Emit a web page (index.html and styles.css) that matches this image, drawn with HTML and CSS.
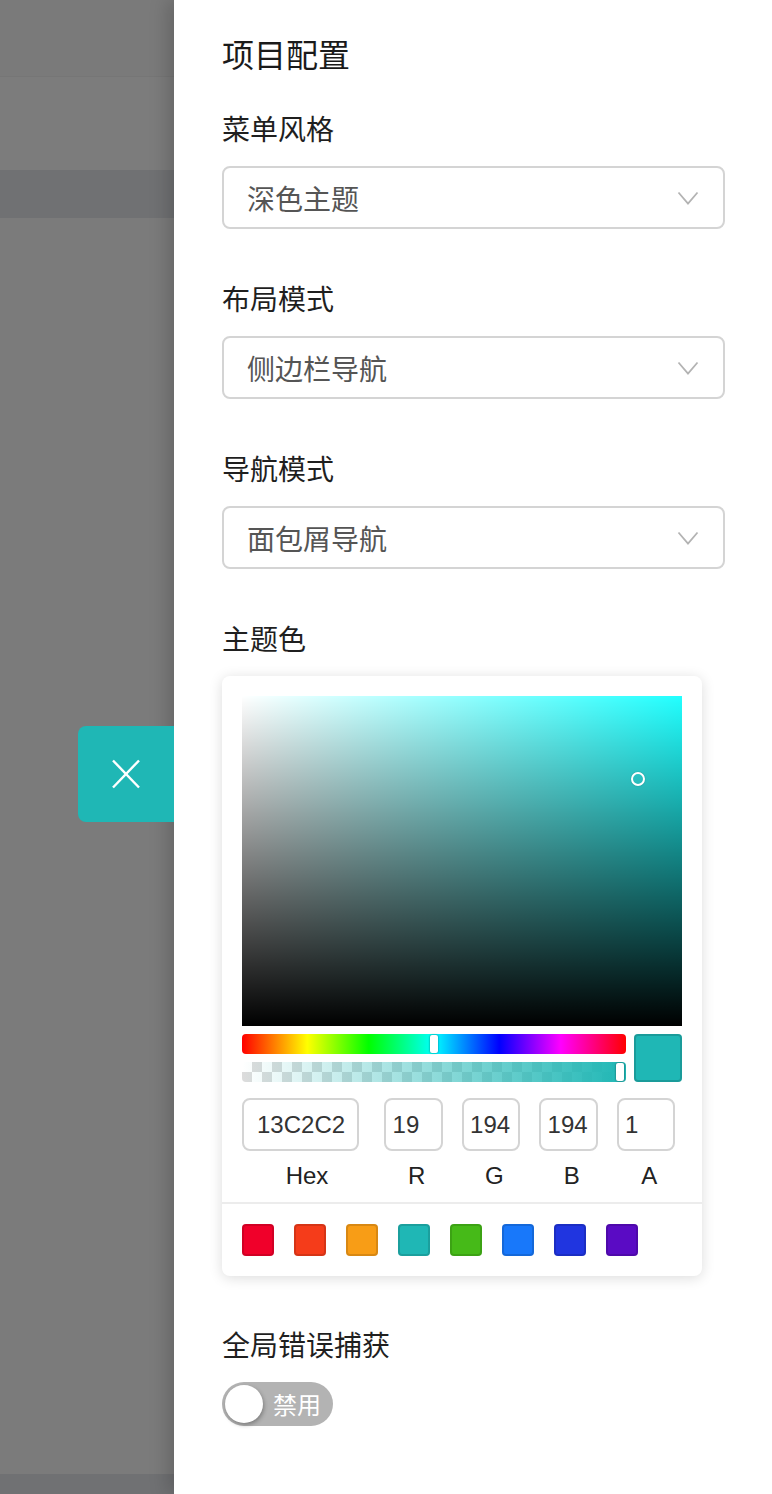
FILE: index.html
```html
<!DOCTYPE html>
<html lang="zh-CN">
<head>
<meta charset="utf-8">
<title>项目配置</title>
<link rel="stylesheet" href="styles.css">
</head>
<body>
<div class="page">
  <div class="backdrop">
    <div class="bd-header"></div>
    <div class="bd-gap"></div>
    <div class="bd-band"></div>
    <div class="bd-fill"></div>
    <div class="bd-footer"></div>
  </div>
  <aside class="drawer">
    <button class="drawer-close" type="button" aria-label="关闭">
      <svg class="close-icon" viewBox="0 0 30 30" width="30" height="30">
        <line x1="2" y1="1.5" x2="28" y2="28.5"></line>
        <line x1="28" y1="1.5" x2="2" y2="28.5"></line>
      </svg>
    </button>
    <h1 class="drawer-title">项目配置</h1>

    <div class="form-item">
      <div class="form-label">菜单风格</div>
      <div class="select">
        <span class="select-value">深色主题</span>
        <svg class="chevron" viewBox="0 0 22 14" width="22" height="14"><polyline points="1.5,1.5 11,12.5 20.5,1.5"></polyline></svg>
      </div>
    </div>

    <div class="form-item">
      <div class="form-label">布局模式</div>
      <div class="select">
        <span class="select-value">侧边栏导航</span>
        <svg class="chevron" viewBox="0 0 22 14" width="22" height="14"><polyline points="1.5,1.5 11,12.5 20.5,1.5"></polyline></svg>
      </div>
    </div>

    <div class="form-item">
      <div class="form-label">导航模式</div>
      <div class="select">
        <span class="select-value">面包屑导航</span>
        <svg class="chevron" viewBox="0 0 22 14" width="22" height="14"><polyline points="1.5,1.5 11,12.5 20.5,1.5"></polyline></svg>
      </div>
    </div>

    <div class="form-item">
      <div class="form-label">主题色</div>
      <div class="picker">
        <div class="sat">
          <div class="sat-pointer" style="left: 90%; top: 25%;"></div>
        </div>
        <div class="controls">
          <div class="sliders">
            <div class="hue"><div class="hue-pointer" style="left: 50%;"></div></div>
            <div class="alpha"><div class="alpha-grad"></div><div class="alpha-pointer"></div></div>
          </div>
          <div class="preview"></div>
        </div>
        <div class="fields">
          <div class="field"><input class="field-input" value="13C2C2"><span class="field-label">Hex</span></div>
          <div class="field field-single"><input class="field-input" value="19"><span class="field-label">R</span></div>
          <div class="field field-single"><input class="field-input" value="194"><span class="field-label">G</span></div>
          <div class="field field-single"><input class="field-input" value="194"><span class="field-label">B</span></div>
          <div class="field field-single"><input class="field-input" value="1"><span class="field-label">A</span></div>
        </div>
        <div class="presets">
          <span class="swatch sw-red"></span>
          <span class="swatch sw-volcano"></span>
          <span class="swatch sw-orange"></span>
          <span class="swatch sw-cyan"></span>
          <span class="swatch sw-green"></span>
          <span class="swatch sw-blue"></span>
          <span class="swatch sw-geek"></span>
          <span class="swatch sw-purple"></span>
        </div>
      </div>
    </div>

    <div class="form-item">
      <div class="form-label">全局错误捕获</div>
      <div class="switch">
        <span class="switch-knob"></span>
        <span class="switch-text">禁用</span>
      </div>
    </div>
  </aside>
</div>
</body>
</html>
```

FILE: styles.css
```css
html, body {
  margin: 0;
  padding: 0;
}
body {
  width: 772px;
  height: 1494px;
  overflow: hidden;
  font-family: "Noto Sans CJK SC", "Noto Sans", sans-serif;
  background: #7b7b7b;
}
.page {
  display: flex;
  width: 772px;
  height: 1494px;
}
.backdrop {
  width: 174px;
  flex: none;
  display: flex;
  flex-direction: column;
  background: #7b7b7b;
}
.bd-header {
  height: 76px;
  background: #7a7a7a;
  border-bottom: 1px solid #767676;
}
.bd-gap {
  height: 93px;
  background: #7c7c7c;
}
.bd-band {
  height: 48px;
  background: #707173;
}
.bd-fill {
  flex: 1;
  background: #7b7b7b;
}
.bd-footer {
  height: 20px;
  background: #707173;
}

.drawer {
  position: relative;
  flex: 1;
  background: #fff;
  padding: 31px 47px 0 48px;
  box-shadow: -6px 0 18px rgba(0, 0, 0, 0.18);
}
.drawer-close {
  position: absolute;
  left: -96px;
  top: 726px;
  width: 96px;
  height: 96px;
  border: 0;
  padding: 0;
  margin: 0;
  background: #1fb7b5;
  border-radius: 8px 0 0 8px;
  display: flex;
  align-items: center;
  justify-content: center;
}
.close-icon line {
  stroke: #fff;
  stroke-width: 2.4;
  stroke-linecap: butt;
}
.drawer-title {
  margin: 0 0 33px;
  font-size: 32px;
  line-height: 44px;
  font-weight: 400;
  color: #1a1a1a;
}
.form-item {
  margin-bottom: 49px;
}
.form-label {
  font-size: 28px;
  line-height: 40px;
  color: #1f1f1f;
  margin-bottom: 18px;
}
.select {
  box-sizing: border-box;
  height: 63px;
  border: 2px solid #d4d4d4;
  border-radius: 8px;
  display: flex;
  align-items: center;
  justify-content: space-between;
  padding: 0 24px 0 23px;
}
.select-value {
  font-size: 28px;
  color: #555;
  line-height: 40px;
}
.chevron polyline {
  fill: none;
  stroke: #b3b3b3;
  stroke-width: 1.8;
}

.picker {
  width: 480px;
  box-sizing: border-box;
  padding: 20px 20px 0;
  border-radius: 8px;
  background: #fff;
  box-shadow: 0 2px 14px rgba(0, 0, 0, 0.14);
  margin-bottom: -1px;
}
.sat {
  position: relative;
  height: 330px;
  background:
    linear-gradient(to top, #000, rgba(0, 0, 0, 0)),
    linear-gradient(to right, #fff, rgba(255, 255, 255, 0)),
    #22ffff;
}
.sat-pointer {
  position: absolute;
  width: 10px;
  height: 10px;
  border: 2.5px solid #fff;
  border-radius: 50%;
  transform: translate(-50%, -50%);
  box-shadow: 0 0 1px rgba(0, 0, 0, 0.5);
}
.controls {
  display: flex;
  gap: 8px;
  margin-top: 8px;
}
.sliders {
  flex: 1;
  display: flex;
  flex-direction: column;
  gap: 8px;
}
.hue {
  position: relative;
  height: 20px;
  border-radius: 4px;
  background: linear-gradient(to right, #f00 0%, #ff0 17%, #0f0 33%, #0ff 50%, #00f 67%, #f0f 83%, #f00 100%);
}
.hue-pointer {
  position: absolute;
  top: 1px;
  width: 8px;
  height: 18px;
  margin-left: -4px;
  background: #fff;
  border-radius: 2px;
  box-shadow: 0 0 2px rgba(0, 0, 0, 0.6);
}
.alpha {
  position: relative;
  height: 20px;
  border-radius: 4px;
  overflow: hidden;
  background-color: #fff;
  background-image: conic-gradient(#dcdcdc 25%, #fff 0 50%, #dcdcdc 0 75%, #fff 0);
  background-size: 20px 20px;
}
.alpha-grad {
  position: absolute;
  inset: 0;
  background: linear-gradient(to right, rgba(31, 183, 181, 0), #1fb7b5);
}
.alpha-pointer {
  position: absolute;
  top: 1px;
  right: 2px;
  width: 8px;
  height: 18px;
  background: #fff;
  border-radius: 2px;
  box-shadow: 0 0 2px rgba(0, 0, 0, 0.6);
}
.preview {
  width: 48px;
  height: 48px;
  border-radius: 4px;
  background: #1fb7b5;
  box-shadow: inset 0 0 0 2px rgba(0, 0, 0, 0.15);
}
.fields {
  display: grid;
  grid-template-columns: 130px repeat(4, 1fr);
  margin-top: 16px;
}
.field {
  display: flex;
  flex-direction: column;
  min-width: 0;
}
.field-single {
  padding-left: 12px;
}
.field-input {
  box-sizing: border-box;
  width: 90%;
  height: 53px;
  margin: 0;
  padding: 0 0 0 10%;
  border: 2px solid #d4d4d4;
  border-radius: 8px;
  font-family: "Liberation Sans", Arial, sans-serif;
  font-size: 24px;
  color: #333;
  background: #fff;
  outline: none;
}
.field-label {
  display: block;
  text-align: center;
  font-family: "Liberation Sans", Arial, sans-serif;
  font-size: 24px;
  line-height: 28px;
  padding-top: 11px;
  color: #222;
}
.presets {
  display: flex;
  gap: 20px;
  margin: 12px -20px 0;
  padding: 20px;
  border-top: 2px solid #ececec;
}
.swatch {
  width: 32px;
  height: 32px;
  border-radius: 4px;
  box-shadow: inset 0 0 0 2px rgba(0, 0, 0, 0.13);
}
.sw-red { background: #f0002a; }
.sw-volcano { background: #f53c1a; }
.sw-orange { background: #f89d16; }
.sw-cyan { background: #1fb7b5; }
.sw-green { background: #46ba18; }
.sw-blue { background: #1878fa; }
.sw-geek { background: #2035e0; }
.sw-purple { background: #5a0bc4; }

.switch {
  position: relative;
  width: 111px;
  height: 44px;
  margin-top: 4px;
  box-sizing: border-box;
  border-radius: 22px;
  background: #b3b3b3;
  display: flex;
  align-items: center;
  padding-left: 51px;
}
.switch-knob {
  position: absolute;
  left: 3px;
  top: 3px;
  width: 38px;
  height: 38px;
  border-radius: 50%;
  background: #fff;
  box-shadow: 1px 2px 4px rgba(0, 0, 0, 0.3);
}
.switch-text {
  font-size: 24px;
  line-height: 30px;
  color: #fff;
}
```
